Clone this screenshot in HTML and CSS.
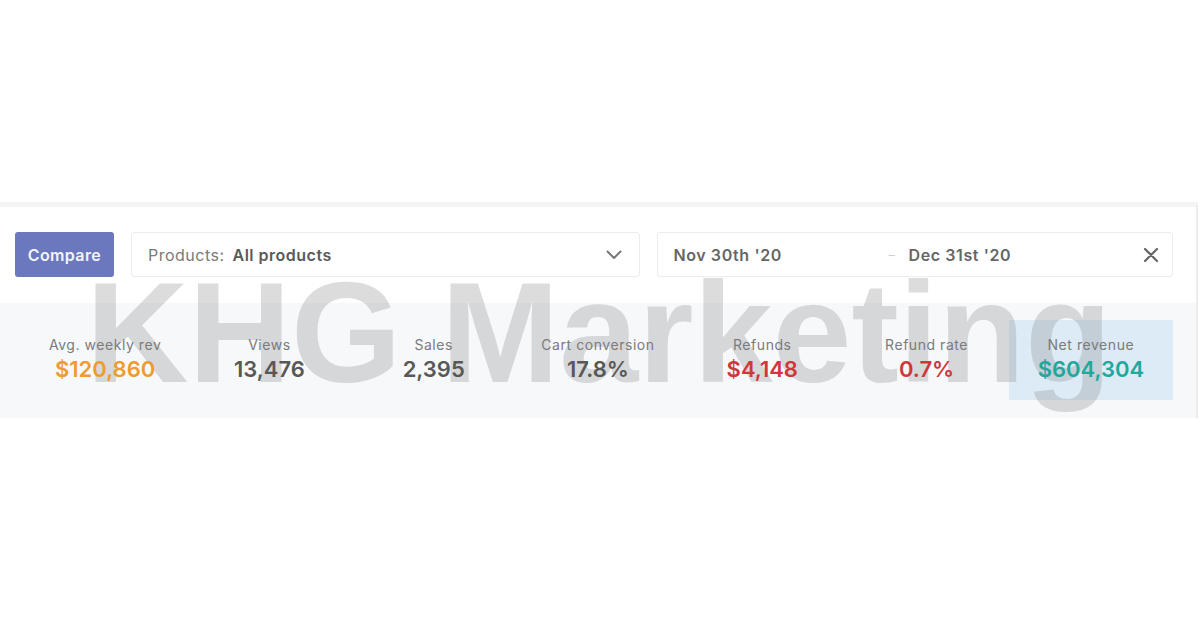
FILE: index.html
```html
<!DOCTYPE html>
<html>
<head>
<meta charset="utf-8">
<link rel="stylesheet" href="styles.css">
</head>
<body>
<div class="page">
  <div class="panel">
    <div class="toolbar">
      <button class="btn-compare">Compare</button>
      <div class="select">
        <span class="select-label">Products:</span>
        <span class="select-value">All products</span>
        <svg class="chevron" width="16" height="10" viewBox="0 0 16 10"><path d="M1.5 1.5 L8 8 L14.5 1.5" fill="none" stroke="#777" stroke-width="2" stroke-linecap="round" stroke-linejoin="round"/></svg>
      </div>
      <div class="daterange">
        <span class="date date-start">Nov 30th '20</span>
        <span class="dash">–</span>
        <span class="date date-end">Dec 31st '20</span>
        <svg class="clear" width="16" height="16" viewBox="0 0 16 16"><path d="M2 2 L14 14 M14 2 L2 14" fill="none" stroke="#666" stroke-width="2.2" stroke-linecap="round"/></svg>
      </div>
    </div>
    <div class="stats">
      <div class="stat"><div class="label">Avg. weekly rev</div><div class="value orange">$120,860</div></div>
      <div class="stat"><div class="label">Views</div><div class="value gray">13,476</div></div>
      <div class="stat"><div class="label">Sales</div><div class="value gray">2,395</div></div>
      <div class="stat"><div class="label">Cart conversion</div><div class="value gray">17.8%</div></div>
      <div class="stat"><div class="label">Refunds</div><div class="value red">$4,148</div></div>
      <div class="stat"><div class="label">Refund rate</div><div class="value red">0.7%</div></div>
      <div class="stat stat-active"><div class="label">Net revenue</div><div class="value teal">$604,304</div></div>
    </div>
  </div>
  <div class="watermark">KHG Marketing</div>
</div>
</body>
</html>
```
FILE: styles.css
```css
html, body {
  margin: 0;
  padding: 0;
  background: #ffffff;
}
body {
  width: 1200px;
  height: 626px;
  overflow: hidden;
  font-family: Inter, "Liberation Sans", Arial, sans-serif;
}
.page {
  position: relative;
  padding-top: 202px;
}
.panel {
  width: 1196px;
  border-top: 5px solid #f4f4f4;
  border-right: 2px solid #ebebeb;
  background: #fff;
}
.toolbar {
  display: flex;
  align-items: stretch;
  gap: 17px;
  padding: 25px 23px 26px 15px;
  height: 45px;
}
.btn-compare {
  width: 99px;
  height: 45px;
  border: none;
  border-radius: 3px;
  background: #6c78bd;
  color: #f2f3fb;
  font-family: inherit;
  font-size: 16px;
  font-weight: 600;
  letter-spacing: 0.4px;
  padding: 0;
}
.select {
  width: 510px;
  box-sizing: border-box;
  border: 1px solid #ececec;
  border-radius: 3px;
  display: flex;
  align-items: center;
  padding: 0 16px;
  font-size: 16px;
  letter-spacing: 0.5px;
}
.select-label {
  color: #7a7a7a;
  margin-right: 8px;
}
.select-value {
  color: #5a5a5a;
  font-weight: 600;
  flex: 1;
}
.chevron {
  margin-right: 1px;
}
.daterange {
  width: 516px;
  box-sizing: border-box;
  border: 1px solid #ececec;
  border-radius: 3px;
  display: flex;
  align-items: center;
  padding: 0 13px 0 15px;
  font-size: 16px;
  letter-spacing: 0.6px;
}
.date {
  color: #666;
  font-weight: 600;
}
.date-start {
  width: 215px;
}
.dash {
  color: #cfcfcf;
  font-size: 13px;
  margin-right: 13px;
}
.date-end {
  flex: 1;
}
.stats {
  background: #f7f8fa;
  display: grid;
  grid-template-columns: repeat(7, 1fr);
  padding: 17px 23px 18px 23px;
}
.stat {
  height: 80px;
  display: flex;
  flex-direction: column;
  align-items: center;
  justify-content: center;
  padding-bottom: 2px;
  box-sizing: border-box;
}
.stat-active {
  background: #dcebf6;
}
.label {
  position: relative;
  z-index: 2;
  font-size: 14px;
  letter-spacing: 0.55px;
  color: #7b7b7b;
  line-height: 18px;
}
.value {
  position: relative;
  z-index: 2;
  font-size: 22px;
  font-weight: 600;
  line-height: 26px;
  margin-top: 2px;
}
.orange { color: #ee9b2f; }
.gray { color: #585858; }
.red { color: #d0373a; }
.teal { color: #1fa89b; }
.watermark {
  position: absolute;
  z-index: 1;
  left: 86px;
  top: 253px;
  font-family: "Liberation Sans", Arial, sans-serif;
  font-size: 142px;
  font-weight: bold;
  line-height: 160px;
  color: rgba(140, 140, 140, 0.3);
  white-space: nowrap;
  pointer-events: none;
}
```
